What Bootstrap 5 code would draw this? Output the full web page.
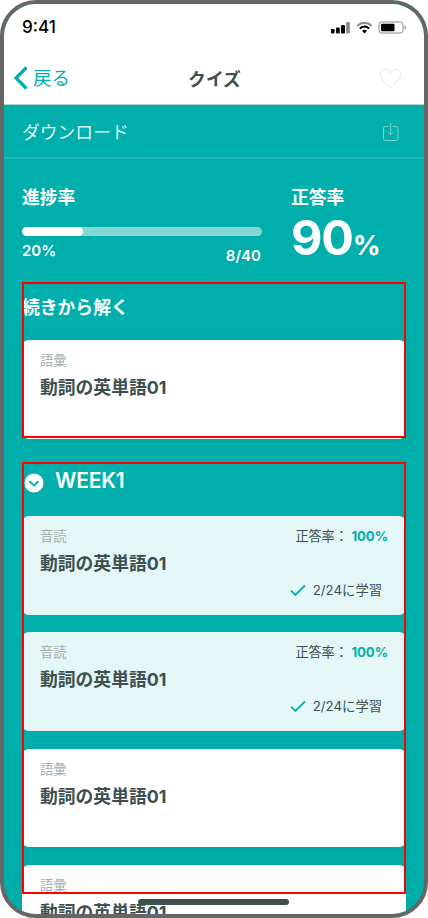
<!DOCTYPE html>
<html lang="ja">
<head>
<meta charset="utf-8">
<meta name="viewport" content="width=device-width, initial-scale=1">
<title>クイズ</title>
<link href="https://cdn.jsdelivr.net/npm/bootstrap@5.3.0/dist/css/bootstrap.min.css" rel="stylesheet">
<style>
:root{--teal:#00afab;--ink:#3d4f4f}
body{font-family:Inter,"Noto Sans CJK JP",sans-serif;color:var(--ink);background:#fff}
.phone{width:428px;height:918px;border:4px solid #666;border-radius:36px;background:var(--teal)}
.topbar{height:101px;border-bottom:1px solid #b5d5d4}
.status{height:46px;padding:0 17px 0 18px;color:#000}
.clock{font-size:17.2px;font-weight:500;line-height:46px}
.titlebar{height:54px;padding:2px 22px 0 9px}
.back{color:var(--teal);font-size:18.5px;gap:5px;width:90px;text-decoration:none}
.back-label{padding-top:1px}
.page-title{font-size:17.8px;padding-top:3px}
.like{width:76px}
.download{height:54px;padding:2px 18px 0 18px;border-bottom:2px solid #1ab7b3;font-size:17.8px;color:#e0f5f4}
.download-label{padding-top:2px}
.stats{height:123px;padding:26px 19px 0 18px;color:#fff}
.lbl{font-size:17.8px;line-height:26px}
.meter{width:240px;height:9px;margin-top:16px;border-radius:5px;background:#84d8d5}
.meter .progress-bar{border-radius:5px;background:#fff}
.pct{font-size:15px;line-height:20px;margin-top:5px}
.count{font-size:15px;line-height:20px;margin-top:10px;padding-right:1px}
.score{font-size:48.5px;line-height:54px;letter-spacing:-1.2px}
.score-unit{font-size:27.5px}
.section{margin:0 18px}
.resume{height:156px}
.resume h2{font-size:17.8px;line-height:26px;padding-top:13px;margin-bottom:19px;color:#fff}
.week{height:432px;margin-top:24px}
.week h2{font-size:21px;font-weight:600;line-height:30px;padding:4px 0 0 2px;height:54px;gap:11px;letter-spacing:-.2px;color:#fff}
.chevron{margin-top:7px}
.lesson{height:98.5px;margin-bottom:17.9px;padding:11px 18px 0;border:0;border-radius:7px;color:var(--ink);box-shadow:0 2px 14px rgba(20,90,88,.09)}
.done{background:#e4f6f6;box-shadow:none}
.kind{font-size:13.3px;line-height:18px;color:#a3adad}
.name{font-size:17.8px;line-height:26px;margin-top:6px}
.rate{font-size:13.2px;line-height:18px;letter-spacing:-.08px}
.rate b{color:var(--teal)}
.when{font-size:13.3px;line-height:18px;padding-right:6px;margin-top:4px;gap:7px}
.home{bottom:9px;left:134px;width:151px;height:6px;border-radius:3px;background:var(--ink)}
.guide{left:18px;top:458px;width:384px;height:432px;border:2px solid red;pointer-events:none}
.guide-top{top:278px;height:156px}
</style>
<script src="https://cdn.jsdelivr.net/npm/bootstrap@5.3.0/dist/js/bootstrap.bundle.min.js"></script>
</head>
<body>
<main class="phone position-relative overflow-hidden">
  <header class="topbar bg-white">
    <div class="status d-flex justify-content-between align-items-center">
      <span class="clock">9:41</span>
      <svg width="77" height="14" viewBox="0 0 77 14">
        <rect x="1" y="9" width="3.600" height="4.500" rx="1.200"/><rect x="6" y="7.500" width="3.800" height="6" rx="1.200"/><rect x="11" y="5" width="4" height="8.500" rx="1.200"/><rect x="16.200" y="2" width="3.600" height="11.500" rx="1.200" fill="#888"/>
        <path d="M27.200 5.800Q34.500 -.2 41.800 5.800" fill="none" stroke="#888" stroke-width="2"/>
        <path d="M29.800 8.600Q34.500 4.400 39.200 8.600" fill="none" stroke="#000" stroke-width="2"/>
        <path d="M32 10.800Q34.500 8.800 37 10.800L34.500 13.500z"/>
        <rect x="49" y="2" width="24" height="11" rx="2.500" fill="none" stroke="#888"/><rect x="51" y="3.700" width="13.500" height="7.600" rx="1"/><path d="M74.500 5.500v4q1.500-.5 1.500-2t-1.500-2" fill="#888"/>
      </svg>
    </div>
    <nav class="titlebar d-flex justify-content-between align-items-center">
      <a class="back d-flex align-items-center" href="#"><svg width="15" height="24" viewBox="0 0 15 24" fill="none" stroke="currentColor" stroke-width="3.200"><path d="M13.500 1.500 3 12l10.500 10.500"/></svg><span class="back-label">戻る</span></a>
      <h1 class="page-title fw-bold mb-0">クイズ</h1>
      <span class="like d-flex justify-content-end"><svg width="23" height="21" viewBox="0 0 23 21" fill="none" stroke="#e3e5e5"><path d="M11.500 19.500C6 15 1.300 11.500 1.300 6.500c0-6 8-7.200 10.200-1.500 2.200-5.700 10.200-4.500 10.200 1.500 0 5-4.700 8.500-10.200 13Z"/></svg></span>
    </nav>
  </header>
  <div class="download d-flex justify-content-between align-items-center">
    <span class="download-label">ダウンロード</span>
    <svg width="27" height="20" viewBox="0 0 27 20" fill="none" stroke="#7fd3d0"><path d="M9.500 4.500H6.500a2 2 0 0 0-2 2v10a2 2 0 0 0 2 2h10.500a2 2 0 0 0 2-2v-10a2 2 0 0 0-2-2h-3M11.700 1v11.500M8.700 9.800l3 3 3-3"/></svg>
  </div>
  <section class="stats d-flex">
    <div>
      <div class="lbl fw-bold">進捗率</div>
      <div class="meter progress"><div class="progress-bar" style="width:25.4%"></div></div>
      <div class="d-flex justify-content-between fw-semibold"><span class="pct">20%</span><span class="count">8/40</span></div>
    </div>
    <div class="ms-auto" style="width:114px">
      <div class="lbl fw-bold">正答率</div>
      <div class="score fw-bold text-nowrap">90<span class="score-unit">%</span></div>
    </div>
  </section>
  <section class="section resume">
    <h2 class="fw-bold">続きから解く</h2>
    <article class="card lesson"><div class="kind">語彙</div><div class="name fw-bold">動詞の英単語01</div></article>
  </section>
  <section class="section week">
    <h2 class="d-flex align-items-start mb-0"><svg class="chevron" width="20" height="20" viewBox="0 0 20 20"><circle cx="10" cy="10" r="9.500" fill="#fff"/><path d="m5.500 8.200 4.500 4.200 4.500-4.200" fill="none" stroke="#00afab" stroke-width="2"/></svg>WEEK1</h2>
    <article class="card lesson done">
      <div class="d-flex justify-content-between"><span class="kind">音読</span><span class="rate">正答率： <b>100%</b></span></div>
      <div class="name fw-bold">動詞の英単語01</div>
      <div class="when d-flex justify-content-end align-items-center"><svg width="16" height="13" viewBox="0 0 16 13" fill="none" stroke="#00afab" stroke-width="1.800"><path d="m1 6.500 4.300 4.500L15 1.500"/></svg>2/24に学習</div>
    </article>
    <article class="card lesson done">
      <div class="d-flex justify-content-between"><span class="kind">音読</span><span class="rate">正答率： <b>100%</b></span></div>
      <div class="name fw-bold">動詞の英単語01</div>
      <div class="when d-flex justify-content-end align-items-center"><svg width="16" height="13" viewBox="0 0 16 13" fill="none" stroke="#00afab" stroke-width="1.800"><path d="m1 6.500 4.300 4.500L15 1.500"/></svg>2/24に学習</div>
    </article>
    <article class="card lesson"><div class="kind">語彙</div><div class="name fw-bold">動詞の英単語01</div></article>
    <article class="card lesson"><div class="kind">語彙</div><div class="name fw-bold">動詞の英単語01</div></article>
  </section>
  <div class="guide guide-top position-absolute"></div>
  <div class="guide position-absolute"></div>
  <div class="home position-absolute"></div>
</main>
</body>
</html>
